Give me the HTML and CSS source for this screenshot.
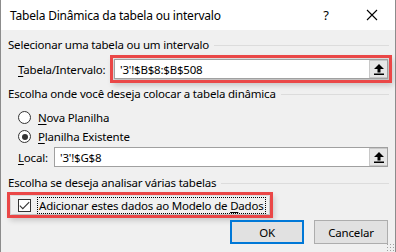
FILE: index.html
```html
<!DOCTYPE html>
<html lang="pt">
<head>
<meta charset="utf-8">
<link rel="stylesheet" href="styles.css">
</head>
<body>
<div class="dialog">
  <div class="titlebar">
    <span class="title">Tabela Dinâmica da tabela ou intervalo</span>
    <span class="help">?</span>
    <span class="close"><svg width="12" height="12" viewBox="0 0 12 12"><path d="M1 1L11 11M11 1L1 11" stroke="#000" stroke-width="1.1" fill="none"/></svg></span>
  </div>
  <div class="body">
    <div class="group-label g1"><span>Selecionar uma tabela ou um intervalo</span><i class="rule"></i></div>
    <div class="row range-row">
      <span class="field-label"><u>T</u>abela/Intervalo:</span>
      <div class="field hl">
        <span class="value">'3'!$B$8:$B$508</span>
        <span class="collapse"><svg width="12" height="12" viewBox="0 0 12 12"><path d="M6 1L11 6H7.5V9.5H4.5V6H1Z" fill="#000"/><rect x="1" y="10.5" width="10" height="1.5" fill="#000"/></svg></span>
      </div>
    </div>
    <div class="group-label g2"><span>Escolha onde você deseja colocar a tabela dinâmica</span><i class="rule"></i></div>
    <div class="radio-row r1"><span class="radio"></span><span><u>N</u>ova Planilha</span></div>
    <div class="radio-row r2"><span class="radio checked"></span><span><u>P</u>lanilha Existente</span></div>
    <div class="row local-row">
      <span class="field-label"><u>L</u>ocal:</span>
      <div class="field">
        <span class="value">'3'!$G$8</span>
        <span class="collapse"><svg width="12" height="12" viewBox="0 0 12 12"><path d="M6 1L11 6H7.5V9.5H4.5V6H1Z" fill="#000"/><rect x="1" y="10.5" width="10" height="1.5" fill="#000"/></svg></span>
      </div>
    </div>
    <div class="group-label g3"><span>Escolha se deseja analisar várias tabelas</span><i class="rule"></i></div>
    <div class="check-wrap">
      <div class="check-row hl2">
        <span class="checkbox"><svg width="11" height="9" viewBox="0 0 11 9"><path d="M0.8 4.6L3.8 7.6L10.2 1.2" stroke="#333" stroke-width="1.1" fill="none"/></svg></span>
        <span class="focus">Adicionar estes dados ao Modelo de <u>D</u>ados</span>
      </div>
    </div>
    <div class="buttons">
      <span class="btn default">OK</span>
      <span class="btn">Cancelar</span>
    </div>
    <span class="grip"></span>
  </div>
</div>
</body>
</html>
```

FILE: styles.css
```css
* { box-sizing: border-box; }
html, body { margin: 0; padding: 0; background: #fff; }
body { font-family: "Noto Sans", "Open Sans", sans-serif; font-size: 11.5px; letter-spacing: -0.2px; color: #000; }
u { text-decoration: underline; text-underline-offset: 2px; }

.dialog {
  width: 396px; height: 252px;
  border-left: 1px solid #8c8c8c; border-right: 1px solid #8c8c8c;
  background: #f0f0f0;
  display: flex; flex-direction: column;
}
.titlebar {
  height: 30px; background: #fff;
  display: flex; align-items: center;
  padding-left: 9px;
  flex: none;
}
.title { font-size: 12px; flex: 1; padding-top: 1px; }
.help { width: 46px; text-align: center; font-size: 13px; }
.close { width: 46px; display: flex; justify-content: center; align-items: center; }

.body { position: relative; flex: 1; padding: 0 6px 0 7px; }

.group-label { display: flex; align-items: center; height: 16px; line-height: 16px; }
.group-label span { white-space: nowrap; padding-right: 5px; }
.group-label .rule { flex: 1; height: 1px; border-top: 1px solid #dcdcdc; margin-top: 1px; }
.g1 { margin-top: 7px; }
.g2 { margin-top: 7px; }
.g3 { margin-top: 8px; }

.row { display: flex; align-items: center; }
.field-label { padding-left: 10px; white-space: nowrap; }
.range-row { margin-top: 6px; height: 20px; }
.range-row .field-label { width: 106px; }
.local-row { margin-top: 1px; height: 20px; }
.local-row .field-label { width: 46px; }

.field {
  flex: 1; height: 20px; margin-right: 1px;
  background: #fff; border: 1px solid #a0a0a0;
  display: flex; align-items: center; justify-content: space-between;
  padding-left: 5px;
}
.hl { outline: 3px solid #ea4747; outline-offset: 1px; box-shadow: 2px 3px 6px 3px rgba(0,0,0,0.2); }
.collapse {
  width: 18px; height: 18px; background: #e6e6e6;
  border: 1px solid #c8c8c8; border-right: none;
  display: flex; align-items: center; justify-content: center;
}

.radio-row { display: flex; align-items: center; height: 19px; padding-left: 10px; }
.r1 { margin-top: 6px; }
.radio {
  width: 13px; height: 13px; border-radius: 50%;
  border: 1px solid #333; background: #fff; margin-right: 7px; position: relative;
}
.radio.checked::after {
  content: ""; position: absolute; left: 2.5px; top: 2.5px;
  width: 6px; height: 6px; border-radius: 50%; background: #333;
}

.check-wrap { display: flex; margin-top: 5px; padding-left: 3px; }
.check-row {
  display: flex; align-items: center; height: 18px;
  padding: 0 3px 0 7px; white-space: nowrap;
}
.hl2 { outline: 3px solid #ea4747; outline-offset: 1px; box-shadow: 2px 3px 6px 3px rgba(0,0,0,0.2); }
.checkbox {
  width: 13px; height: 13px; border: 1px solid #333; background: #fff;
  margin-right: 6px; display: flex; align-items: center; justify-content: center;
}
.focus { border: 1px dotted #000; padding: 0 1px; line-height: 15px; }

.buttons { display: flex; justify-content: flex-end; gap: 10px; margin-top: 6px; padding-right: 1px; }
.btn {
  width: 74px; height: 24px; display: flex; align-items: center; justify-content: center;
  background: #e1e1e1; border: 1px solid #adadad;
}
.btn.default { border: 2px solid #0078d7; }

.grip {
  position: absolute; right: 1px; bottom: 1px; width: 8px; height: 8px;
  background-image: radial-gradient(circle, #a0a0a0 0.8px, transparent 1px);
  background-size: 3px 3px;
}
```
